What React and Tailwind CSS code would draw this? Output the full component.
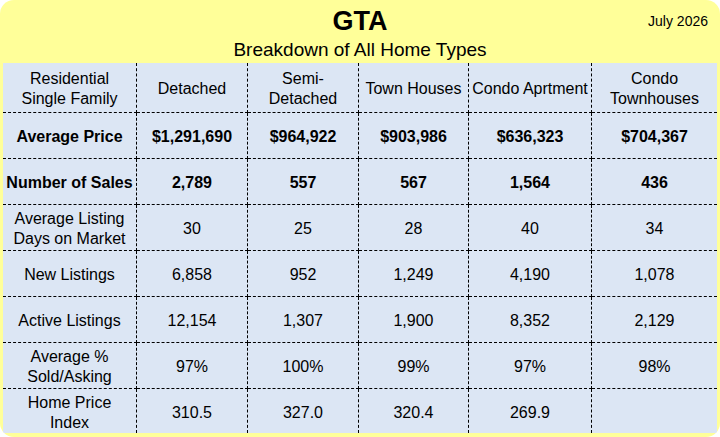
import React from "react";

const header = [
  ["Residential", "Single Family"],
  ["Detached"],
  ["Semi-", "Detached"],
  ["Town Houses"],
  ["Condo Aprtment"],
  ["Condo", "Townhouses"],
];

const rows = [
  { label: ["Average Price"], bold: true, vals: ["$1,291,690", "$964,922", "$903,986", "$636,323", "$704,367"] },
  { label: ["Number of Sales"], bold: true, vals: ["2,789", "557", "567", "1,564", "436"] },
  { label: ["Average Listing", "Days on Market"], vals: ["30", "25", "28", "40", "34"] },
  { label: ["New Listings"], vals: ["6,858", "952", "1,249", "4,190", "1,078"] },
  { label: ["Active Listings"], vals: ["12,154", "1,307", "1,900", "8,352", "2,129"] },
  { label: ["Average %", "Sold/Asking"], vals: ["97%", "100%", "99%", "97%", "98%"] },
  { label: ["Home Price", "Index"], vals: ["310.5", "327.0", "320.4", "269.9", ""] },
];

function Cell({ lines, lastCol, lastRow, bold }) {
  return (
    <div
      className={
        "flex flex-col items-center justify-center pt-[3px] text-center text-[16px] leading-[20px] text-black border-black border-dashed " +
        (lastCol ? "" : "border-r ") +
        (lastRow ? "" : "border-b ") +
        (bold ? "font-bold" : "")
      }
    >
      {lines.map((l, i) => (
        <span key={i} className="whitespace-nowrap">{l}</span>
      ))}
    </div>
  );
}

export default function App() {
  const cells = [];
  header.forEach((h, c) => {
    cells.push(<Cell key={"h" + c} lines={h} lastCol={c === 5} lastRow={false} />);
  });
  rows.forEach((r, ri) => {
    const lastRow = ri === rows.length - 1;
    cells.push(<Cell key={"l" + ri} lines={r.label} bold={r.bold} lastCol={false} lastRow={lastRow} />);
    r.vals.forEach((v, c) => {
      cells.push(
        <Cell key={ri + "-" + c} lines={[v]} bold={r.bold} lastCol={c === 4} lastRow={lastRow} />
      );
    });
  });

  return (
    <div
      className="w-[720px] h-[437px] bg-[#ffff99] rounded-[14px] flex flex-col px-[3px] pb-[4px] overflow-hidden"
      style={{ fontFamily: '"Liberation Sans", Arial, sans-serif' }}
    >
      <div className="h-[63px] shrink-0 flex flex-col text-black">
        <div className="grid grid-cols-[1fr_auto_1fr] items-start pt-[5px]">
          <div></div>
          <div className="text-[27px] leading-[32px] font-bold">GTA</div>
          <div className="justify-self-end pr-[9px] pt-[7px] text-[14px] leading-[18px]">July 2026</div>
        </div>
        <div className="text-center text-[19px] leading-[22px] mt-[2px]">Breakdown of All Home Types</div>
      </div>
      <div className="grid grid-cols-[134px_111px_111px_110px_123px_125px] grid-rows-[50px_46px_46px_46px_46px_46px_46px_44px] bg-[#dce6f4] w-[714px]">
        {cells}
      </div>
    </div>
  );
}
